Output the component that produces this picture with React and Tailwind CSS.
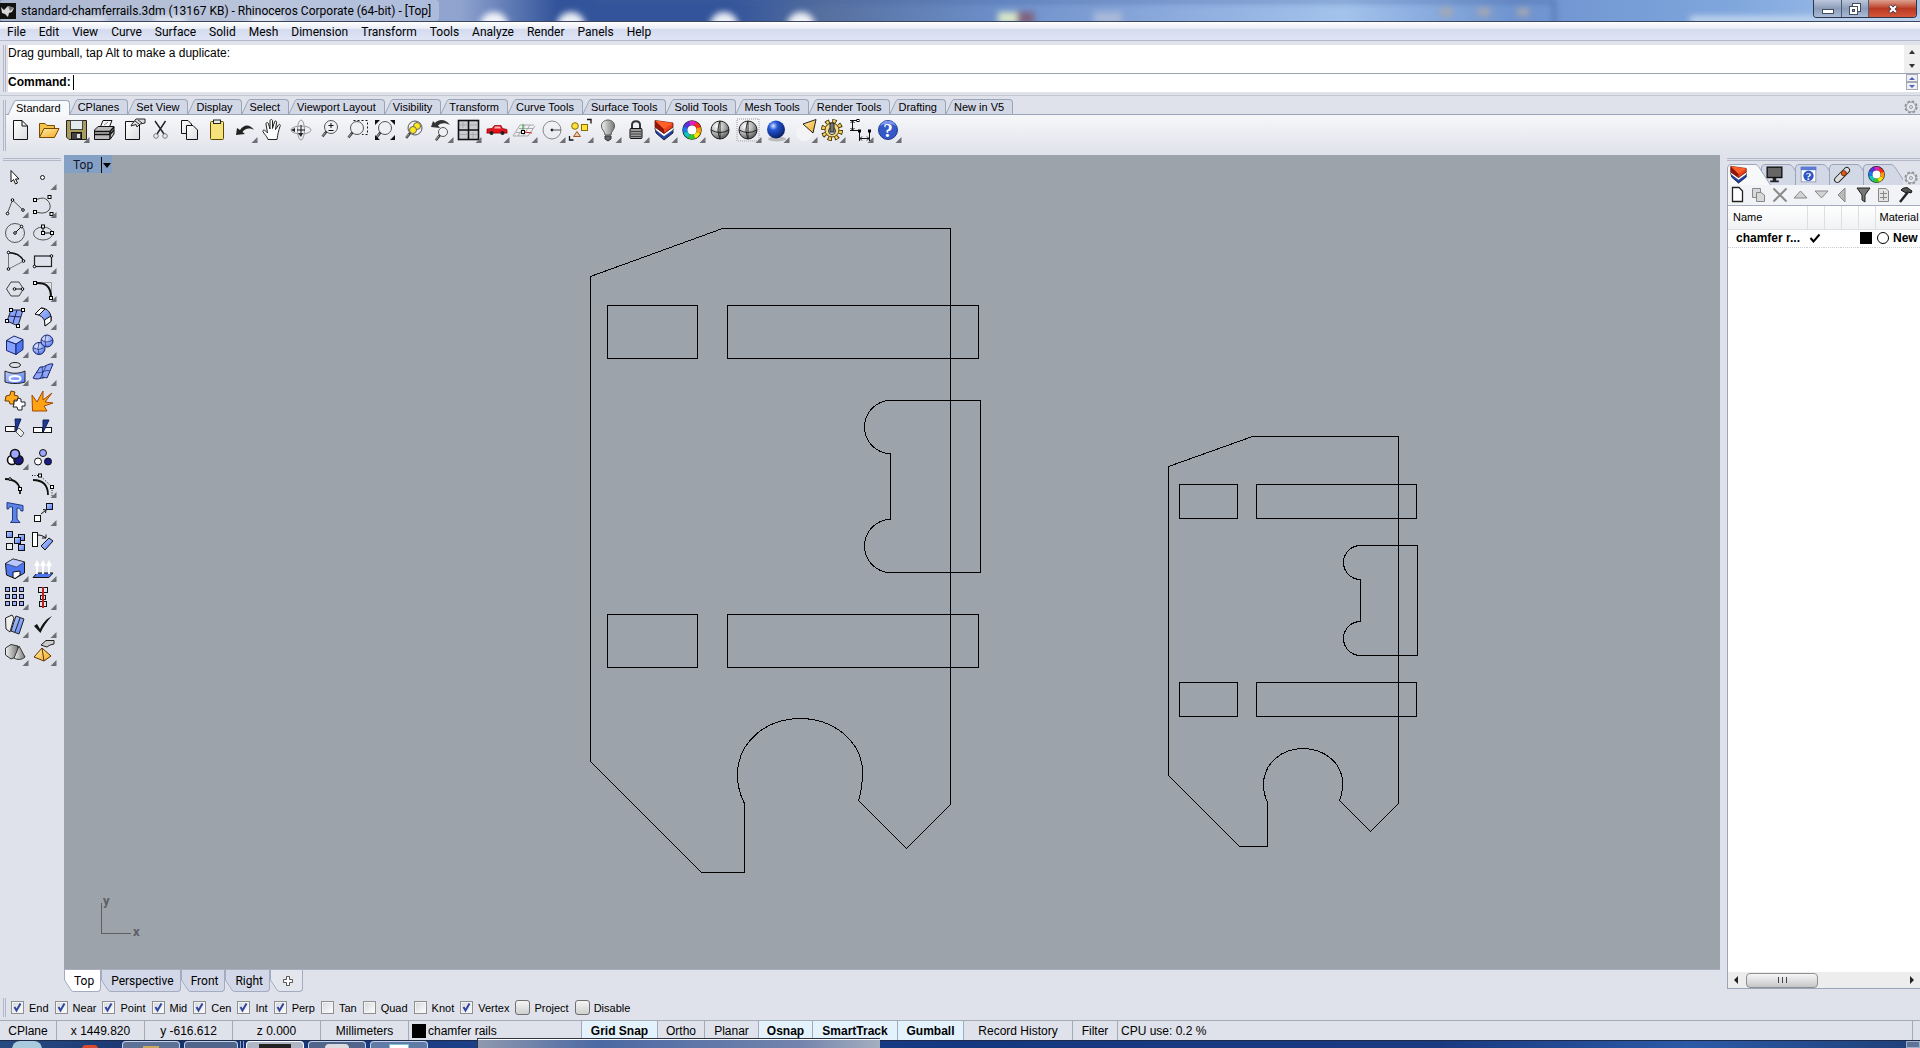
import React from "react";

const MENUS = [
  "File", "Edit", "View", "Curve", "Surface", "Solid", "Mesh", "Dimension",
  "Transform", "Tools", "Analyze", "Render", "Panels", "Help",
];

const TOOL_TABS = [
  "Standard", "CPlanes", "Set View", "Display", "Select", "Viewport Layout", "Visibility",
  "Transform", "Curve Tools", "Surface Tools", "Solid Tools", "Mesh Tools", "Render Tools",
  "Drafting", "New in V5",
];

const VIEW_TABS = ["Top", "Perspective", "Front", "Right"];

const OSNAPS = [
  ["End", true], ["Near", true], ["Point", true], ["Mid", true], ["Cen", true], ["Int", true],
  ["Perp", true], ["Tan", false], ["Quad", false], ["Knot", false], ["Vertex", true],
];

const TOGGLES = [
  { label: "Grid Snap", on: true, width: "w-[76px]" },
  { label: "Ortho", on: false, width: "w-[47px]" },
  { label: "Planar", on: false, width: "w-[54px]" },
  { label: "Osnap", on: true, width: "w-[54px]" },
  { label: "SmartTrack", on: true, width: "w-[85px]" },
  { label: "Gumball", on: true, width: "w-[66px]" },
  { label: "Record History", on: false, width: "w-[109px]" },
  { label: "Filter", on: false, width: "w-[45px]" },
];

// Small control point square used by most of the curve icons
function Pt({ x, y, s = 3 }) {
  return <rect x={x - s / 2} y={y - s / 2} width={s} height={s} fill="#fff" stroke="#000" />;
}

function Dot({ x, y }) {
  return <circle cx={x} cy={y} r="1.3" fill="#fff" stroke="#000" />;
}

function Defs() {
  return (
    <svg width="0" height="0" className="absolute" aria-hidden="true">
      <defs>
        <radialGradient id="gray" cx="0.35" cy="0.3" r="0.8">
          <stop offset="0" stopColor="#fff" />
          <stop offset="0.5" stopColor="#b4b4b4" />
          <stop offset="1" stopColor="#444" />
        </radialGradient>
        <radialGradient id="deep" cx="0.35" cy="0.3" r="0.8">
          <stop offset="0" stopColor="#dbe8ff" />
          <stop offset="0.3" stopColor="#2456d8" />
          <stop offset="1" stopColor="#04164e" />
        </radialGradient>
        <radialGradient id="ball" cx="0.35" cy="0.3" r="0.8">
          <stop offset="0" stopColor="#e4ebff" />
          <stop offset="1" stopColor="#4a6fe8" />
        </radialGradient>
        <linearGradient id="blue" x1="0" y1="0" x2="1" y2="1">
          <stop offset="0" stopColor="#c3d1ff" />
          <stop offset="1" stopColor="#4f7af5" />
        </linearGradient>
        <linearGradient id="gold" x1="0" y1="0" x2="1" y2="1">
          <stop offset="0" stopColor="#fff3b0" />
          <stop offset="1" stopColor="#f5a51c" />
        </linearGradient>
        <linearGradient id="paper" x1="0" y1="0" x2="1" y2="1">
          <stop offset="0" stopColor="#fff" />
          <stop offset="1" stopColor="#d9dcdf" />
        </linearGradient>
        <linearGradient id="ash" x1="0" y1="0" x2="1" y2="0">
          <stop offset="0" stopColor="#f2f2f2" />
          <stop offset="1" stopColor="#777" />
        </linearGradient>
      </defs>
    </svg>
  );
}

const Lens = ({ x = 16, y = 12, r = 6.5 }) => (
  <>
    <circle cx={x} cy={y} r={r} fill="#eef0f4" stroke="#555" />
    <path d={`M${x - r * 0.7} ${y + r * 0.7} L${x - r * 0.7 - 4} ${y + r * 0.7 + 5}`} stroke="#333" strokeWidth="2.4" />
    <path d={`M${x - r * 0.7 - 1} ${y + r * 0.7 + 1} l-3 3.8`} stroke="#eee" strokeWidth="0.7" />
  </>
);

const ColorWheel = ({ x = 14, y = 14, r = 7 }) => {
  const colors = ["#ff2a1a", "#ff9a00", "#f2e600", "#35c52c", "#10c8c0", "#1878ee", "#5a30e0", "#e01fc0"];
  return (
    <>
      <circle cx={x} cy={y} r={r} fill="none" stroke="#222" strokeWidth="5.5" />
      {colors.map((c, i) => (
        <circle
          key={c} cx={x} cy={y} r={r} fill="none" stroke={c} strokeWidth="4.2" pathLength="8"
          strokeDasharray="1.04 6.96" strokeDashoffset={-i} transform={`rotate(-65 ${x} ${y})`}
        />
      ))}
      <circle cx={x} cy={y} r={r - 2.4} fill="#fff" />
    </>
  );
};

const LayerStack = () => (
  <>
    <path d="M5 12 L14 19.5 L23 13 V17 L14 24 L6 17 Z" fill="#1e3fae" stroke="#111" strokeWidth="0.8" />
    <path d="M5 11 L14 17.5 L23 11 V14 L14 20.5 L5.5 14 Z" fill="#fff" stroke="#445" strokeWidth="0.5" />
    <path d="M5 4.5 L23 7 V11 L14 17.5 L5 11 Z" fill="#ee4118" stroke="#400" strokeWidth="0.7" />
    <path d="M5 4.5 L14 13 V17.5 L5 11 Z" fill="#8f1609" />
    <path d="M5 4.5 L23 7 L14 13 Z" fill="#ff5f2a" />
  </>
);

const GlobeLines = () => <path d="M5 14 q9 5 18 0 M14 5 q-4 9 0 18 M14 5 v18" fill="none" stroke="#222" />;

const STANDARD = [
  ["New", false, <path key="a" d="M7.5 4.5 H16 L21.5 10 V23.5 H7.5 Z M16 4.5 V10 H21.5" fill="url(#paper)" stroke="#111" />],
  ["Open", false, <g key="a" stroke="#7a4a00" strokeLinejoin="round"><path d="M5.5 21.5 V7.5 H11 L13 9.5 H20.5 V13" fill="#f3c34b" /><path d="M5.5 21.5 L10 12.5 H25 L20.5 21.5 Z" fill="url(#gold)" /></g>],
  ["Save", true, <g key="a"><path d="M4.5 4.5 H24.5 V23.5 H7 L4.5 21 Z" fill="#a99c5c" stroke="#222" /><rect x="8.5" y="4.5" width="12" height="9" fill="#e3eaf0" stroke="#444" /><rect x="9.5" y="16.5" width="10" height="7" fill="#444" stroke="#111" /><rect x="15" y="18" width="3" height="4" fill="#ddd" /></g>],
  ["Print", false, <g key="a" stroke="#111"><path d="M10 12 L13 4.5 H22 L19 12 Z" fill="#f8f8f8" /><path d="M4.5 14 L8 10.5 H24 V18 L20 23.5 H4.5 Z" fill="#bbb" /><path d="M5 15.5 H20 V23 M5 18.5 H20 L24 14 M20 15.5 L24 11" strokeWidth="1.5" fill="none" /><path d="M14 9 l4 -3" stroke="#888" /></g>],
  ["Properties", false, <g key="a"><path d="M7.5 5.5 H21.5 V23.5 H7.5 Z" fill="url(#paper)" stroke="#111" /><path d="M14 8 L18 3 H27 V7 L22 8 L19 11 L18 8.5 L13 10 Z" fill="#ddd" stroke="#222" /><path d="M17 5 l4 3 M20 4 l4 3" stroke="#333" /></g>],
  ["Cut", false, <g key="a" fill="none"><path d="M9 5 L18 18 M19.5 5 L11 18" stroke="#222" strokeWidth="1.4" /><circle cx="10" cy="20" r="2.3" stroke="#777" /><circle cx="19" cy="20" r="2.3" stroke="#777" /></g>],
  ["Copy", false, <g key="a" fill="url(#paper)" stroke="#111"><path d="M7.5 4.5 H14 L17.5 8 V17.5 H7.5 Z" /><path d="M12.5 9.5 H19 L23.5 14 V23.5 H12.5 Z" /></g>],
  ["Paste", false, <g key="a" stroke="#222"><rect x="8.5" y="5.5" width="13" height="18" rx="1" fill="#f6e27a" stroke="#5c4a00" /><rect x="11.5" y="4" width="7" height="3.5" fill="#e8e8e8" /></g>],
  ["Undo", true, <path key="a" d="M6 19 L7 12 L10 14 C14 8 20 8 24 14 C19 11.5 15 12.5 12.5 16 L15 18 Z" fill="#222" />],
  ["Pan", false, <path key="a" d="M10 23.5 C9 20 4 16 5 14.5 C6.5 13 8.5 16 9.5 17 L8 8 C8 6 10 6 10.5 8 L12 13 V5 C12 3 14.5 3 14.5 5 V12.5 L16.5 6 C17 4 19 5 18.5 7 L17.5 13.5 L20.5 9 C21.5 7.5 23 9 22 10.5 C20.5 15 20 17 19 23.5 Z" fill="#fff" stroke="#222" />],
  ["Rotate View", false, <g key="a" fill="none" stroke="#999"><ellipse cx="15" cy="14" rx="10" ry="4" /><ellipse cx="15" cy="14" rx="3.5" ry="10" /><path d="M15 9 V19 M11 14 H19" stroke="#111" /><path d="M12 17 l3 4 l2 -4 Z M9 12 l-4 2 l4 2 Z" fill="#222" stroke="none" /></g>],
  ["Zoom Dynamic", false, <g key="a"><Lens x={17} y={11} /><path d="M14.5 9.5 H19.5 M17 7 V12 M14.5 14.5 H19.5" stroke="#111" /></g>],
  ["Zoom Window", false, <g key="a"><path d="M11.5 4.5 H25.5 V18.5 H20" fill="none" stroke="#111" strokeDasharray="2 2" /><Lens x={15} y={12} /></g>],
  ["Zoom Extents", false, <g key="a"><Lens x={15} y={12} /><path d="M5 4 h5 l-5 5 Z M25 4 h-5 l5 5 Z M5 24 h5 l-5 -5 Z M25 24 h-5 l5 -5 Z" fill="#111" /></g>],
  ["Zoom Selected", false, <g key="a"><Lens x={17} y={12} r={7} /><circle cx="19" cy="10" r="3.5" fill="#ffe81a" stroke="#666" /><circle cx="15" cy="14" r="3.5" fill="#ffe81a" stroke="#666" /></g>],
  ["Undo View", true, <g key="a"><Lens x={17} y={16} r={4.5} /><path d="M5 11 L7 5 L9 7 C14 2 20 4 24 9 C19 6.5 15 7 12 9.5 L14 12 Z" fill="#333" /></g>],
  ["4 Viewports", true, <g key="a"><rect x="4.5" y="4.5" width="20" height="19" fill="#c9ccd1" stroke="#111" strokeWidth="1.6" /><path d="M14.5 4 V24 M4 14 H25" stroke="#111" strokeWidth="1.6" /><path d="M6 9 h7 M9 6 v6 M16 9 h7 M6 18.5 h7 M16 18.5 h7 M19 16 v6" stroke="#aaa" /></g>],
  ["Right View", true, <g key="a"><path d="M4 17 H26" stroke="#e28b8b" /><path d="M5 13 L10 12.5 L12.5 9.5 H19 L20.5 12.5 L25 13.5 V17 H5 Z" fill="#e3121c" stroke="#8c0007" strokeWidth="0.7" /><path d="M13 10.5 h5 l1 2 h-7 Z" fill="#f6b8b8" /><circle cx="9.5" cy="17" r="2" fill="#222" /><circle cx="20.5" cy="17" r="2" fill="#222" /></g>],
  ["Set CPlane", true, <g key="a" fill="none" stroke="#aaa"><path d="M3 20 L10 9 H24 M3 20 H18 L25 10 M6 16.5 H20 M9 12.5 H23 M8 20 L15 9 M13 20 L20 9" /><path d="M13 16 V8" stroke="#2ba02b" /><path d="M13 16 L22 17" stroke="#d22" /><Pt x={13} y={16} /></g>],
  ["Object Snap", true, <g key="a" fill="none" stroke="#888"><circle cx="14" cy="14" r="9" /><circle cx="14" cy="14" r="1" fill="#111" stroke="#111" /><path d="M14 14 H23" stroke="#555" /></g>],
  ["Select", true, <g key="a"><circle cx="9" cy="10" r="3.3" fill="#ffe13a" stroke="#8a6d00" /><rect x="15.5" y="8.5" width="6" height="6" fill="#ffe13a" stroke="#8a6d00" /><path d="M7.5 20.5 L11 15.5 L14.5 20.5 Z" fill="#eec9a4" stroke="#a3541d" /><path d="M21 3.5 h4 v4 M3.5 20 v4 h4" fill="none" stroke="#111" strokeWidth="1.3" /></g>],
  ["Hide", true, <g key="a"><path d="M7.5 10 C7.5 2 20.5 2 20.5 10 C20.5 14 17 15 17 19 H11 C11 15 7.5 14 7.5 10 Z" fill="url(#ash)" stroke="#555" /><path d="M11 20 h6 v3 l-3 2 l-3 -2 Z" fill="#666" stroke="#333" /></g>],
  ["Lock", true, <g key="a"><path d="M10 13 V9 C10 4 18 4 18 9 V13" fill="none" stroke="#333" strokeWidth="2" /><rect x="8" y="12.5" width="12" height="10" rx="1" fill="#999" stroke="#111" /><path d="M9 15.5 H19 M9 18 H19 M9 20.5 H19" stroke="#444" /></g>],
  ["Layers", true, <LayerStack key="a" />],
  ["Object Properties", true, <ColorWheel key="a" />],
  ["Shade", false, <g key="a"><circle cx="14" cy="14" r="9" fill="url(#gray)" stroke="#222" /><GlobeLines /></g>],
  ["Rendered", true, <g key="a"><rect x="3" y="3" width="22" height="22" fill="none" stroke="#c4c6ca" strokeWidth="2" strokeDasharray="1 1" /><circle cx="14" cy="14" r="9" fill="url(#gray)" stroke="#222" /><GlobeLines /></g>],
  ["Render", true, <g key="a"><ellipse cx="15" cy="23" rx="9" ry="2.5" fill="#bbb" /><circle cx="14" cy="13.5" r="9" fill="url(#deep)" /></g>],
  ["Spotlight", true, <g key="a"><circle cx="14" cy="17" r="8" fill="#f4f4f6" /><path d="M13 8 L26 3.5 L23 17 Z" fill="url(#gold)" stroke="#222" /></g>],
  ["Options", true, <g key="a"><circle cx="14" cy="14" r="8.5" fill="none" stroke="#3f2b00" strokeWidth="5" strokeDasharray="4 2.676" /><circle cx="14" cy="14" r="8.5" fill="none" stroke="#f2cf5e" strokeWidth="3.4" strokeDasharray="2.4 4.276" strokeDashoffset="-0.8" /><circle cx="14" cy="14" r="7" fill="#f6dd84" stroke="#5c4408" /><circle cx="14" cy="15" r="3.5" fill="#eef0f3" stroke="#333" /><rect x="12" y="7" width="4" height="9" fill="#777" stroke="#222" /></g>],
  ["Dimensions", true, <g key="a" fill="none" stroke="#111"><path d="M4 4.5 H12 M4 14.5 H12 M6.5 5 V14 M4.5 7 l2 -2 l2 2 M4.5 12 l2 2 l2 -2 M13.5 16 V25 M23.5 16 V25 M14 22.5 H23 M16 20.5 l-2 2 l2 2 M21 20.5 l2 2 l-2 2" /><Pt x={12} y={4.5} s={2} /><Pt x={13.5} y={15} s={2} /><Pt x={23.5} y={15} s={2} /></g>],
  ["Help", true, <g key="a"><circle cx="14" cy="14" r="9.5" fill="#3558c8" stroke="#20398c" /><path d="M6 10 C8 3 20 3 22 10 C17 7 11 7 6 10" fill="#7c98ea" /><text x="14" y="20.5" textAnchor="middle" className="font-['Liberation_Serif',serif] text-[19px] font-bold" fill="#fff">?</text></g>],
];

const PALETTE = [
  ["Pointer", false, <path key="a" d="M10 7.5 V19 L12.5 16.5 L14.5 21 L16.5 20 L14.5 16 H18 Z" fill="#fff" stroke="#111" />],
  ["Point", true, <circle key="a" cx="13.5" cy="14.5" r="2" fill="#fff" stroke="#111" />],
  ["Polyline", true, <g key="a" fill="none" stroke="#555"><path d="M6.5 22 L11.5 9 L22 19" /><Dot x={6.5} y={22.5} /><Dot x={11.5} y={9} /><Dot x={22} y={19} /></g>],
  ["Control Point Curve", true, <g key="a" fill="none" stroke="#444"><path d="M6 9 C12 7 15 6 18 9 C22 12 22 18 19 20 C15 23 12 22 6 21" /><Pt x={6} y={9} /><Pt x={20.5} y={6} /><Pt x={6} y={21} /><Pt x={22.5} y={23} /></g>],
  ["Circle", true, <g key="a" fill="none" stroke="#555"><circle cx="14" cy="14" r="9.5" /><path d="M14 14 L20 8" stroke="#111" /><Dot x={14} y={14} /><Dot x={20.5} y={7.5} /></g>],
  ["Ellipse", true, <g key="a" fill="none" stroke="#555"><ellipse cx="14" cy="14.5" rx="9.5" ry="6.5" /><path d="M14 8 V14 H23" stroke="#111" /><Pt x={14} y={7.5} /><Pt x={14} y={14} /><Pt x={23} y={14} /></g>],
  ["Arc", true, <g key="a" fill="none" stroke="#777"><path d="M7.5 22 V6 M7.5 22 L23 14" /><path d="M7.5 5.5 C15 6 20 8 22.5 14" stroke="#111" strokeWidth="1.5" /><Dot x={7.5} y={5.5} /><Dot x={22.5} y={14} /><Dot x={7.5} y={22} /></g>],
  ["Rectangle", true, <g key="a"><rect x="5.5" y="9" width="17" height="10.5" fill="none" stroke="#222" strokeWidth="1.2" /><Dot x={22.5} y={9} /><Dot x={5.5} y={19.5} /></g>],
  ["Polygon", true, <g key="a" fill="none" stroke="#444"><path d="M10 7 H18 L22.5 14 L18 21 H10 L5.5 14 Z" /><path d="M13 14 H22" stroke="#111" /><Dot x={13.5} y={14} /><Dot x={21.5} y={14} /></g>],
  ["Fillet", true, <g key="a" fill="none"><path d="M6 7.5 H22.5 V23" stroke="#999" /><path d="M6 8 C16 7.5 22 10 22 23" stroke="#111" strokeWidth="2" /><Pt x={6} y={8} /><Pt x={22} y={23} /></g>],
  ["Surface", true, <g key="a"><path d="M10 7 L22 7 L17 23 L6 18 Z" fill="#8aa2f7" stroke="#223" /><path d="M8 13 L20 14 M16 7 L12 20" stroke="#225" /><Pt x={10} y={7} /><Pt x={22} y={7} /><Pt x={6} y={18} /><Pt x={17} y={23} /></g>],
  ["Loft", true, <g key="a" stroke="#111" strokeLinejoin="round"><path d="M6 11 L12 5 C19 5 23 11 22 18 L16 23 C17 17 13 12 6 11 Z" fill="url(#blue)" /><path d="M6 11 L12 5 L16 6 L10 12 Z" fill="#fff" /><path d="M15.5 17 L22 13 V18.5 L16 23 Z" fill="#fff" /></g>],
  ["Box", true, <g key="a" stroke="#14236e" strokeLinejoin="round"><path d="M5.5 9.5 L15 13 V23.5 L5.5 19.5 Z" fill="#86a0ff" /><path d="M15 13 L22 8.5 V18.5 L15 23.5 Z" fill="#4f78f0" /><path d="M5.5 9.5 L13 5 L22 8.5 L15 13 Z" fill="#c4d0ff" /></g>],
  ["Boolean Union", true, <g key="a" stroke="#14236e"><circle cx="10" cy="17.5" r="6" fill="url(#ball)" /><circle cx="18" cy="10" r="6" fill="url(#ball)" /><path d="M4.5 17 q5 3 10 0 M10 12 q-2 5 0 11 M12.5 9 q5 4 11 0 M17 4 q-2 6 0 12" fill="none" strokeWidth="0.7" /></g>],
  ["Project", true, <g key="a" stroke="#222"><ellipse cx="14" cy="6" rx="5.5" ry="2.5" fill="none" /><path d="M4 12 C10 15 18 15 24 12 V23 C18 25 10 25 4 23 Z" fill="url(#blue)" /><ellipse cx="14" cy="19.5" rx="5.5" ry="2.5" fill="none" stroke="#fff" strokeWidth="2" /></g>],
  ["Mesh", true, <g key="a" stroke="#14236e"><path d="M11 8 C16 9 18 4 24 5 L18 19 C13 17 10 22 4 19 Z" fill="#8fa6f7" /><path d="M8 13.500 C13 15 15 10 21 12 M17 7 L11 20 M13 7 L14 20" fill="none" strokeWidth="0.7" /></g>],
  ["Puzzle", false, <g key="a" strokeLinejoin="round"><path d="M5 9 l4 -1 l1 -4 l4 1 l-1 3 l4 1 l0 4 l-4 0 l0 4 l-4 0 l-1 -3 l-4 0 Z" fill="#ffa91c" stroke="#6e3c00" /><path d="M13 14 l3 0 l1 -3 l3 1 l0 3 l4 0 l0 4 l-3 0 l0 4 l-4 0 l-1 -3 l-4 0 l1 -3 Z" fill="#fff" stroke="#222" /></g>],
  ["Explode", false, <path key="a" d="M3.500 24 L3 8 L8 15 L14 4 L14 13 L23 6 L16 15 L24 16 L15 19 L18 24 Z" fill="#ffa214" stroke="#a24a00" />],
  ["Trim", false, <g key="a" stroke="#111"><path d="M4.5 11.5 H14 L14 16.5 H4.5 Z" fill="#fff" /><path d="M14 16 l4 -3 l5 5 l-3 4 Z" fill="#eee" stroke="#555" /><path d="M14 4 L20 4 L15 16.5 Z" fill="#1f3a94" stroke="#0d1e58" /></g>],
  ["Split", false, <g key="a" stroke="#111"><rect x="4.5" y="12.5" width="9" height="5" fill="#fff" /><rect x="13.5" y="12.5" width="9" height="5" fill="#fff" /><path d="M14 5 L20 5 L14 17.5 Z" fill="#1f3a94" stroke="#0d1e58" /></g>],
  ["Join", true, <g key="a" stroke="#111" strokeWidth="1.6"><circle cx="11" cy="17" r="4.5" fill="#fff" /><circle cx="17.5" cy="17" r="4.5" fill="#1b1b86" /><circle cx="14" cy="11" r="4.5" fill="#9ea6ff" /></g>],
  ["Group", false, <g key="a" stroke="#111"><circle cx="9" cy="18.5" r="3.5" fill="#fff" /><circle cx="19" cy="18.5" r="3.5" fill="#1b1b86" /><circle cx="14" cy="10" r="3.5" fill="#9ea6ff" /></g>],
  ["Edit Points", false, <g key="a"><path d="M4 8 C14 8 20 13 19 23" fill="none" stroke="#111" strokeWidth="1.8" /><Dot x={9} y={8} /><Pt x={19} y={18} s={3} /></g>],
  ["Control Points On", true, <g key="a" fill="none"><path d="M4 9 C14 9 19 14 19 24" stroke="#111" strokeWidth="1.8" /><path d="M3 4.5 H11 L23 16 V25" stroke="#111" strokeDasharray="1 1.5" /><Pt x={11} y={4.5} /><Pt x={23} y={16} /></g>],
  ["Text", false, <path key="a" d="M6 3.5 L22 6.5 V12 H20 C19 9.5 18 9 16 9 V20 L19 23.5 H9.5 L11.5 21 V8 C9 7.5 8 8 7.5 10 H6 Z" fill="#5b84e6" stroke="#203a86" />],
  ["Move", true, <g key="a"><rect x="5.5" y="16.5" width="6" height="6" fill="#fff" stroke="#111" /><rect x="17.5" y="4.5" width="6" height="6" fill="url(#blue)" stroke="#111" /><path d="M12 15 L17 11 M14 10.5 L17 11 L16.5 14" fill="none" stroke="#111" /></g>],
  ["Copy Objects", false, <g key="a" stroke="#111"><rect x="5.5" y="4.5" width="6" height="6" fill="url(#blue)" /><rect x="17.5" y="7.5" width="6" height="6" fill="url(#blue)" /><rect x="13.5" y="10.5" width="6" height="6" fill="url(#blue)" /><rect x="5.5" y="16.5" width="6" height="6" fill="#eee" /><rect x="17.5" y="17.5" width="6" height="6" fill="url(#blue)" /></g>],
  ["Rotate", false, <g key="a" stroke="#111"><rect x="3.5" y="5.5" width="5" height="14" fill="#fff" /><path d="M12 19 L20 11 L24 14 L16 23 Z" fill="url(#blue)" /><path d="M9 8 C12 8 14 9 17 11 M17 7.5 V11 H13" fill="none" /></g>],
  ["Solid Tools", true, <g key="a" stroke="#111" strokeLinejoin="round"><path d="M4.5 8.5 L12 4 L23.5 7 V18 L14 23.5 L5.5 20 Z" fill="#4f78f0" /><path d="M4.5 8.5 L12 4 L23.5 7 L15.5 12 Z" fill="#b9c8ff" strokeWidth="0.5" /><path d="M12 17 L19 16 V20 L14 23.5 L12 22.500 Z" fill="#fff" /></g>],
  ["Extrude", true, <g key="a"><path d="M4 22.5 L8 18 H24 L20 22.5 Z" fill="#4f78f0" stroke="#111" /><path d="M8 19 V9 M14 19 V9 M20 19 V9 M6 11 l2 -4 l2 4 M12 11 l2 -4 l2 4 M18 11 l2 -4 l2 4" fill="none" stroke="#fff" strokeWidth="1.8" /></g>],
  ["Array", true, <g key="a" stroke="#111" fill="#9db2ff">{[4.5, 11.5, 18.5].map((x) => [4.5, 11.5, 18.5].map((y) => <rect key={`${x}-${y}`} x={x} y={y} width="4" height="4" />))}</g>],
  ["Align", true, <g key="a" fill="none" stroke="#111"><rect x="9.5" y="4.5" width="9" height="5" /><rect x="11.5" y="12.5" width="5" height="4" /><rect x="10.5" y="18.5" width="7" height="5" /><path d="M14 4 V25" stroke="#c41f1f" strokeWidth="2" /></g>],
  ["Flow", true, <g key="a" stroke="#222"><path d="M4.5 7 L11 4 L13 7 L9 21 L5 18 Z" fill="#eee" /><path d="M10 20 L15 5 L23 8 L18 23 Z" fill="url(#blue)" /><path d="M14 21 L19 7" /></g>],
  ["Check", true, <path key="a" d="M5 15 L8 13 L11 18 C14 12 17 8 23 5 C18 10 14 16 11.5 22 Z" fill="#111" />],
  ["Shade Objects", true, <g key="a" stroke="#333"><path d="M4.5 9 L10 5.5 L17 7 V17 L10 20 L4.5 16 Z" fill="url(#ash)" /><path d="M13 19 L18 7 L24 18 C21 21 16 21 13 19 Z" fill="url(#ash)" /></g>],
  ["Pyramid", true, <g key="a" stroke="#5b3300"><path d="M5 18 L13 9 L22 17 L15 22 Z" fill="url(#gold)" /><path d="M13 9 L15 22" /><path d="M12 6 L17 1.5 H25 V5 L21 6 L18 8 Z" fill="#ccc" stroke="#222" /></g>],
];

const LAYER_TOOLS = [
  ["New Layer", <path key="a" d="M4.5 2.5 H11 L14.5 6 V16.5 H4.5 Z" fill="#fff" stroke="#222" strokeWidth="1.3" />],
  ["New Sublayer", <g key="a" fill="#d8d8d8" stroke="#888"><path d="M3.5 3.5 H11.5 V12.5 H3.5 Z" /><path d="M7.5 7.5 H12 L15.5 10 V16.5 H7.5 Z" /></g>],
  ["Delete", <path key="a" d="M3.5 3.5 L16.5 16.5 M16.5 3.5 L3.5 16.5" stroke="#8b8b8b" strokeWidth="2" />],
  ["Move Up", <path key="a" d="M3 13 L9.5 6 L16 13 Z" fill="#d2d2d2" stroke="#888" />],
  ["Move Down", <path key="a" d="M3 6 L9.5 13 L16 6 Z" fill="#d2d2d2" stroke="#888" />],
  ["Move Left", <path key="a" d="M12 3 V17 L5 10 Z" fill="#b9b9b9" stroke="#888" />],
  ["Filter Layers", <path key="a" d="M3 3 H16 L11 10 V17 L8 15 V10 Z" fill="#777" stroke="#222" />],
  ["Sheet", <g key="a" fill="#e3e3e3" stroke="#888"><path d="M3.5 3.5 H11 L13.5 6 V16.5 H3.5 Z" /><path d="M5 8.5 H12 M5 12.5 H12 M8.5 6 V15" /></g>],
  ["Tools", <g key="a"><path d="M5 5 C8 2 12 2 13 4 L16 6 L15 8 L12 7 L10 8 Z" fill="#555" stroke="#111" /><path d="M12 7 L4 17" stroke="#222" strokeWidth="2.4" /></g>],
];

const PANEL_TABS = [
  ["Layers", <LayerStack key="a" />],
  ["Display", <g key="a"><rect x="5.5" y="5.5" width="17" height="12" fill="#666" stroke="#111" strokeWidth="1.6" /><path d="M12 18 h4 v3 h3 v2 H9 v-2 h3 Z" fill="#222" /></g>],
  ["Help", <g key="a"><rect x="5.5" y="5.5" width="17" height="17" fill="#fff" stroke="#8a93b4" /><path d="M5 5 H23 V9 H5 Z" fill="#5b7bd5" /><circle cx="14" cy="15.5" r="6" fill="#2f55c6" /><text x="14" y="20" textAnchor="middle" className="font-['Liberation_Serif',serif] text-[13px] font-bold" fill="#fff">?</text></g>],
  ["Materials", <g key="a" strokeLinecap="round"><path d="M8 20 L19 9" stroke="#222" strokeWidth="7.500" /><path d="M8 20 L19 9" stroke="#ddd" strokeWidth="5.500" /><circle cx="15.500" cy="12.500" r="3" fill="#e2571c" stroke="#531" /></g>],
  ["Properties", <ColorWheel key="a" />],
];

function ToolButton({ label, menu, children }) {
  return (
    <button type="button" aria-label={label} title={label} className="h-7 w-7 shrink-0">
      <svg viewBox="0 0 28 28" className="h-7 w-7">
        {children}
        {menu && <path d="M27.5 21 V27 H21.5 Z" fill="#6d6f74" />}
      </svg>
    </button>
  );
}

function Gear() {
  return (
    <button type="button" aria-label="Toolbar options" className="h-3.5 w-3.5 shrink-0">
      <svg viewBox="0 0 16 16" className="h-3.5 w-3.5" fill="none" stroke="#8f9297">
        <circle cx="8" cy="8" r="6.500" strokeWidth="2" strokeDasharray="3 2.105" />
        <circle cx="8" cy="8" r="5.500" fill="#e6e8ed" />
        <circle cx="8" cy="8" r="1.700" />
      </svg>
    </button>
  );
}

function TitleBar() {
  return (
    <header className="relative flex h-[22px] shrink-0 items-start justify-between overflow-hidden border-b border-[#3b465e] bg-[linear-gradient(90deg,#8f9fc0_0%,#a3b2d0_14%,#8fa3cf_24%,#33549a_29%,#33549a_38%,#56709f_43%,#6d8fca_52%,#8fadde_62%,#a3c3ec_70%,#6f93cf_79%,#7fa6dd_90%,#a6c4ea_100%)]">
      {/* blurred desktop seen through the glass */}
      <div aria-hidden="true" className="absolute inset-0 blur-[3px]">
        <i className="absolute left-[3%] top-4 h-2 w-12 bg-white/60" />
        <i className="absolute left-[8%] top-4 h-2 w-8 bg-white/60" />
        <i className="absolute left-[13%] top-4 h-2 w-8 bg-white/70" />
        <i className="absolute left-[25%] top-3 h-4 w-7 rounded-t-full bg-white/90" />
        <i className="absolute left-[29%] top-3 h-4 w-7 rounded-t-full bg-white/90" />
        <i className="absolute left-[37%] top-3 h-4 w-7 rounded-t-full bg-white/90" />
        <i className="absolute left-[41%] top-3 h-4 w-7 rounded-t-full bg-white/90" />
        <i className="absolute left-[52%] top-3 h-3 w-5 bg-[#d9e6c8]" />
        <i className="absolute left-[53%] top-3 h-3 w-4 bg-[#80627c]" />
        <i className="absolute left-[57%] top-3 h-3 w-7 bg-[#a9b9d8]" />
        <i className="absolute left-[31%] top-0 h-7 w-[50%] border-r-2 border-t-2 border-[#42629e]" />
        <i className="absolute left-[75%] top-2 h-2 w-3 bg-[#a7a7b0]" />
        <i className="absolute left-[77%] top-2 h-2 w-3 bg-[#a7a7b0]" />
        <i className="absolute left-[79%] top-2 h-2 w-3 bg-[#a7a7b0]" />
        <i className="absolute left-[88%] top-4 h-2 w-[30%] bg-[#c2d6ef]" />
      </div>
      <div className="relative flex items-center gap-[5px] rounded bg-white/25 pr-2">
        <svg viewBox="0 0 16 16" className="h-5 w-4">
          <rect width="16" height="16" fill="#111" />
          <path d="M1 4 L4 7 L8 3 L14 5 L12 9 L9 10 L8 14 L5 11 L2 10 Z" fill="#d8d8d8" />
          <path d="M8 3 L10 8 L14 5" fill="#777" />
        </svg>
        <h1 className="whitespace-nowrap pt-px text-xs leading-5 text-black">
          standard-chamferrails.3dm (13167 KB) - Rhinoceros Corporate (64-bit) - [Top]
        </h1>
      </div>
      <div className="relative mr-[3px] flex h-[18px] overflow-hidden rounded-b border border-t-0 border-[#2d3648]">
        <button type="button" aria-label="Minimize" className="flex w-7 items-center justify-center border-r border-[#4e5b78] bg-gradient-to-b from-[#bcc7dc] via-[#8c9cb8] to-[#a9bbd8]">
          <svg viewBox="0 0 14 14" className="h-3.5 w-3.5"><rect x="1.5" y="7.5" width="11" height="4" fill="#fff" stroke="#444c60" /></svg>
        </button>
        <button type="button" aria-label="Restore" className="flex w-[27px] items-center justify-center border-r border-[#4e5b78] bg-gradient-to-b from-[#bcc7dc] via-[#8c9cb8] to-[#a9bbd8]">
          <svg viewBox="0 0 14 14" className="h-3.5 w-3.5" fill="#fff" stroke="#444c60">
            <rect x="4.5" y="1.5" width="8" height="8" />
            <rect x="1.5" y="4.5" width="8" height="8" />
            <rect x="4.5" y="7.5" width="2" height="2" fill="#8494b4" />
          </svg>
        </button>
        <button type="button" aria-label="Close" className="flex w-[47px] items-center justify-center bg-gradient-to-b from-[#dca08f] via-[#b93a22] to-[#d5563a]">
          <svg viewBox="0 0 14 14" className="h-3 w-3">
            <path d="M3 3 L11 11 M11 3 L3 11" stroke="#50303a" strokeWidth="4.5" />
            <path d="M3.5 3.5 L10.5 10.5 M10.5 3.5 L3.5 10.5" stroke="#fff" strokeWidth="2.5" />
          </svg>
        </button>
      </div>
    </header>
  );
}

function MenuBar() {
  return (
    <nav className="flex h-[19px] shrink-0 items-end gap-[13px] border-b border-[#b3b9cb] bg-[linear-gradient(#ffffff_0%,#e8ecf6_38%,#d4dbee_40%,#dfe5f5_100%)] pl-[7px]">
      {MENUS.map((name) => (
        <button key={name} type="button" className="text-xs leading-4">{name}</button>
      ))}
    </nav>
  );
}

function CommandArea() {
  return (
    <section className="flex h-[55px] shrink-0 border-b border-[#c3c7d0] pb-[3px] pt-1 font-['Liberation_Sans',Arial,sans-serif] text-xs">
      <div className="ml-[3px] mr-0.5 w-[3px] shrink-0 border-x border-[#b1b7c7]" />
      <div className="flex min-w-0 flex-1 flex-col bg-white">
        <div className="flex h-[29px] shrink-0 justify-between border-b border-[#9aa4b4]">
          <p className="leading-4">Drag gumball, tap Alt to make a duplicate:</p>
          <div className="flex w-4 flex-col items-center justify-around bg-[#efefef]">
            <button type="button" aria-label="Scroll up" className="border-x-[3px] border-b-4 border-x-transparent border-b-[#333]" />
            <button type="button" aria-label="Scroll down" className="border-x-[3px] border-t-4 border-x-transparent border-t-[#333]" />
          </div>
        </div>
        <div className="flex h-4 items-center">
          <label htmlFor="command" className="font-bold leading-4">Command:</label>
          <span className="ml-0.5 h-[15px] w-px bg-black" />
          <input id="command" className="h-4 min-w-0 flex-1 outline-none" />
          <div className="mr-0.5 flex h-4 w-3 flex-col justify-between border border-[#a4a8b2] bg-[#a4a8b2]">
            <button type="button" aria-label="Previous command" className="flex h-[6px] items-center justify-center bg-[#eef0f5]"><span className="border-x-[3px] border-b-[3px] border-x-transparent border-b-[#4762b8]" /></button>
            <button type="button" aria-label="Next command" className="flex h-[6px] items-center justify-center bg-[#eef0f5]"><span className="border-x-[3px] border-t-[3px] border-x-transparent border-t-[#4762b8]" /></button>
          </div>
        </div>
      </div>
    </section>
  );
}

function ToolbarArea() {
  return (
    <section className="flex h-[59px] shrink-0 pb-1 pt-1">
      <div className="ml-[3px] w-[3px] shrink-0 border-x border-[#b1b7c7]" />
      <div className="min-w-0 flex-1">
        <div className="flex h-[15px] items-end border-b border-[#9aa6b8] pl-0.5 font-['Liberation_Sans',Arial,sans-serif] text-[11px]">
          {TOOL_TABS.map((name, i) => {
            const active = i === 0;
            return (
              <button key={name} type="button" className={`flex h-[15px] shrink-0 ${active ? "-mb-px" : ""}`}>
                <svg viewBox="0 0 8 15" className={`h-[15px] w-2 ${active ? "fill-[#f8f9fb]" : "fill-[#d3d8e7]"}`}>
                  <path d="M0 15 L8 0 V15 Z" />
                  <path d="M0 15 L6 2 Q7 0.500 8 0.500" fill="none" stroke="#9aa6b8" />
                </svg>
                <span className={`h-[15px] rounded-tr border-r border-t border-[#9aa6b8] pr-2 leading-[15px] ${active ? "bg-[#f8f9fb]" : "bg-[#d3d8e7]"}`}>
                  {name}
                </span>
              </button>
            );
          })}
          <div className="ml-auto mr-0.5 flex">
            <Gear />
          </div>
        </div>
        <div className="flex h-10 items-start bg-gradient-to-b from-[#f6f7f9] to-[#dfe2ea] pt-px">
          {STANDARD.map(([label, menu, art]) => (
            <ToolButton key={label} label={label} menu={menu}>{art}</ToolButton>
          ))}
        </div>
      </div>
    </section>
  );
}

function Palette() {
  return (
    <aside className="w-16 shrink-0 pt-[3px]">
      <div className="mx-[3px] mb-0.5 h-[3px] border-y border-[#b1b7c7]" />
      <div className="ml-px grid w-14 grid-cols-2">
        {PALETTE.map(([label, menu, art]) => (
          <ToolButton key={label} label={label} menu={menu}>{art}</ToolButton>
        ))}
      </div>
    </aside>
  );
}

function Viewport() {
  return (
    <div className="relative min-h-0 flex-1 overflow-hidden bg-[#9da3ab]">
      <svg viewBox="64 155 1656 814" preserveAspectRatio="xMidYMid meet" className="absolute inset-0 h-full w-full" fill="none" stroke="#000" shapeRendering="crispEdges">
        {/* standard size plate */}
        <path d="M590.5 276.5 L722.5 228.5 H950.5 V804.5 L906.5 848.5 L858.5 800.5 C861 793 862.5 784 862.5 772 C862.5 742 834 718.5 800 718.5 C766 718.5 737.5 742 737.5 775 C737.5 788 741 797 744.5 803.5 V872.5 H701.5 L590.5 761.5 Z" />
        <path d="M607.5 305.5 H697.5 V358.5 H607.5 Z M727.5 305.5 H978.5 V358.5 H727.5 Z" />
        <path d="M607.5 614.5 H697.5 V667.5 H607.5 Z M727.5 614.5 H978.5 V667.5 H727.5 Z" />
        <path d="M980.5 400.5 H890.5 A26 26.5 0 0 0 890.5 453.5 V519.5 A26 26.5 0 0 0 890.5 572.5 H980.5 Z" />
        {/* scaled plate */}
        <path d="M1168.5 466.5 L1252.5 436.5 H1398.5 V803.5 L1370.5 831.5 L1339.5 800.5 C1341.5 796 1342.5 790 1342.5 783 C1342.5 763 1324 748.5 1303 748.5 C1282 748.5 1263.5 763 1263.5 785 C1263.5 792 1265 797 1267.5 802.5 V846.5 H1239.5 L1168.5 775.5 Z" />
        <path d="M1179.5 484.5 H1237.5 V518.5 H1179.5 Z M1256.5 484.5 H1416.5 V518.5 H1256.5 Z" />
        <path d="M1179.5 682.5 H1237.5 V716.5 H1179.5 Z M1256.5 682.5 H1416.5 V716.5 H1256.5 Z" />
        <path d="M1417.5 545.5 H1360.5 A17 17 0 0 0 1360.5 579.5 V621.5 A17 17 0 0 0 1360.5 655.5 H1417.5 Z" />
        {/* world axes */}
        <path d="M101.5 903 V933.5 H131" stroke="#5c5f64" />
        <text x="133" y="936" fill="#5c5f64" stroke="none" className="text-[13px] font-bold">x</text>
        <text x="103" y="905" fill="#5c5f64" stroke="none" className="text-[13px] font-bold">y</text>
      </svg>
      <button type="button" className="absolute left-0 top-0 flex h-[18px] items-end bg-[#84a0c4] pl-[9px] text-xs leading-4 text-[#10182a]">
        Top
        <span className="ml-2 h-4 w-px bg-black" />
        <span className="mx-px mb-[5px] border-x-[4px] border-t-[5px] border-x-transparent border-t-black" />
      </button>
    </div>
  );
}

function ViewTabs() {
  return (
    <div className="flex h-[29px] shrink-0 items-start border-t border-[#a8adc0]">
      {VIEW_TABS.concat("+").map((name) => {
        const fill = name === "Top" ? "bg-white" : name === "+" ? "bg-[#e3e6ed]" : "bg-[#d3d8e9]";
        const svgFill = name === "Top" ? "#ffffff" : name === "+" ? "#e3e6ed" : "#d3d8e9";
        return (
          <button key={name} type="button" aria-label={name === "+" ? "New viewport" : name} className="flex h-[22px] text-xs">
            <svg viewBox="0 0 10 22" className="h-[22px] w-2.5">
              <path d="M0 0 H10 V21.5 Q8 21.5 7 20 L0.5 10 V0" fill={svgFill} />
              <path d="M10 21.5 Q8 21.5 7 20 L0.5 10 V0" fill="none" stroke="#a3abc0" />
            </svg>
            <span className={`flex h-[22px] items-center rounded-br border-b border-r border-[#a3abc0] pr-1.5 leading-4 ${fill}`}>
              {name === "+" ? (
                <svg viewBox="0 0 12 12" className="mx-0.5 h-3 w-3">
                  <path d="M4.5 1.5 h3 v3 h3 v3 h-3 v3 h-3 v-3 h-3 v-3 h3 Z" fill="#fff" stroke="#555" />
                </svg>
              ) : (
                name
              )}
            </span>
          </button>
        );
      })}
    </div>
  );
}

function LayersPanel() {
  return (
    <aside className="w-[200px] shrink-0 pb-[9px] pl-[7px] pt-[3px]">
      <div className="flex h-full flex-col">
        <div className="mb-[3px] h-[3px] shrink-0 border-y border-[#b1b7c7]" />
        <div className="flex h-[21px] shrink-0 items-end">
          {PANEL_TABS.map(([label, art], i) => (
            <button key={label} type="button" aria-label={label} className={`relative h-[21px] w-[34px] shrink-0 ${i === 0 ? "z-10" : ""}`}>
              <svg viewBox="0 0 44 21" className="absolute left-0 top-0 h-[21px] w-11">
                <path d="M0.5 21 V4 Q0.5 0.5 4 0.5 H28 Q30 0.5 31.5 2.5 L43.5 21" fill={i === 0 ? "#f7f8fa" : "#d3d8e7"} stroke="#9aa6b8" />
                <svg x={i === 0 ? 2 : 4} y="1" width="19" height="19" viewBox="3 3 22 22">{art}</svg>
              </svg>
            </button>
          ))}
          <div className="relative ml-auto mr-0.5 flex bg-[#dfe2ea] pl-px">
            <Gear />
          </div>
        </div>
        <div className="flex min-h-0 flex-1 flex-col overflow-hidden border-b border-l border-[#9aa6b8] bg-white">
          <div className="flex h-[21px] shrink-0 items-center gap-px border-b border-[#a4adbd] bg-[#f1f3f6]">
            {LAYER_TOOLS.map(([label, art]) => (
              <button key={label} type="button" aria-label={label} className="h-5 w-5 shrink-0">
                <svg viewBox="0 0 20 20" className="h-5 w-5">{art}</svg>
              </button>
            ))}
          </div>
          <div className="min-h-0 flex-1 font-['Liberation_Sans',Arial,sans-serif]">
            <table className="w-full table-fixed text-left">
              <colgroup>
                <col className="w-[79px]" />
                <col className="w-[17px]" />
                <col className="w-[17px]" />
                <col className="w-[17px]" />
                <col className="w-[17px]" />
                <col />
              </colgroup>
              <thead className="bg-gradient-to-b from-white to-[#f1f2f4] text-[11px]">
                <tr className="h-[23px] border-b border-[#dcdfe4]">
                  <th scope="col" className="border-r border-[#dcdfe4] pl-[5px] font-normal">Name</th>
                  <td className="border-r border-[#dcdfe4]" />
                  <td className="border-r border-[#dcdfe4]" />
                  <td className="border-r border-[#dcdfe4]" />
                  <td className="border-r border-[#dcdfe4]" />
                  <th scope="col" className="pl-1 font-normal">Material</th>
                </tr>
              </thead>
              <tbody className="text-xs font-bold">
                <tr className="h-[18px] border-b border-dotted border-[#c9ccd2]">
                  <td className="whitespace-nowrap pl-2 leading-4">chamfer r...</td>
                  <td>
                    <svg viewBox="0 0 12 12" className="ml-0.5 h-3 w-3"><path d="M1.5 6 L4.5 9.5 L10.5 2.5" fill="none" stroke="#000" strokeWidth="2" /></svg>
                  </td>
                  <td />
                  <td />
                  <td><span className="ml-0.5 block h-3 w-3 bg-black" /></td>
                  <td>
                    <span className="flex items-center gap-1 pl-0.5 leading-4">
                      <span className="h-3 w-3 shrink-0 rounded-full border border-black" />
                      New
                    </span>
                  </td>
                </tr>
              </tbody>
            </table>
          </div>
          <div className="flex h-4 shrink-0 items-center bg-[#ededee] px-1.5">
            <button type="button" aria-label="Scroll left" className="border-y-[4px] border-r-4 border-y-transparent border-r-[#222]" />
            <div className="ml-2 flex h-[15px] w-[72px] items-center justify-center gap-[3px] rounded-sm border border-[#8f8f8f] bg-gradient-to-b from-[#f5f5f5] via-[#dfdfe1] to-[#c6c6ca]">
              <i className="h-1.5 w-px bg-[#444]" />
              <i className="h-1.5 w-px bg-[#444]" />
              <i className="h-1.5 w-px bg-[#444]" />
            </div>
            <button type="button" aria-label="Scroll right" className="ml-auto border-y-[4px] border-l-4 border-y-transparent border-l-[#222]" />
          </div>
        </div>
      </div>
    </aside>
  );
}

function SnapBox({ label, checked }) {
  return (
    <label className="relative flex items-center gap-[5px]">
      <input type="checkbox" defaultChecked={checked} className="peer h-[13px] w-[13px] appearance-none border border-[#8e8f8f] bg-gradient-to-br from-[#d3d6dc] to-white shadow-[inset_0_0_0_1px_#f4f4f4]" />
      <svg viewBox="0 0 13 13" className="pointer-events-none absolute left-0 hidden h-[13px] w-[13px] peer-checked:block">
        <path d="M3.5 6 L5.5 9.5 L9.5 2.5" fill="none" stroke="#31479e" strokeWidth="2" />
      </svg>
      {label}
    </label>
  );
}

function OsnapBar() {
  return (
    <div className="flex h-[22px] shrink-0 items-center gap-1.5 pb-[3px] font-['Liberation_Sans',Arial,sans-serif] text-[11px] leading-4">
      <div className="-mr-px ml-[3px] h-[19px] w-[3px] border-x border-[#b1b7c7]" />
      {OSNAPS.map(([label, checked]) => (
        <SnapBox key={label} label={label} checked={checked} />
      ))}
      {["Project", "Disable"].map((label) => (
        <label key={label} className="flex items-center gap-1">
          <input type="checkbox" className="h-[15px] w-[15px] appearance-none rounded-[3px] border border-[#6f6f6f] bg-gradient-to-b from-[#f6f6f6] to-[#cfcfcf]" />
          {label}
        </label>
      ))}
    </div>
  );
}

function StatusBar() {
  const cell = "flex shrink-0 items-center justify-center border-r border-[#a3abb9]";
  return (
    <footer className="flex h-5 shrink-0 border-t border-[#a3abb9] font-['Liberation_Sans',Arial,sans-serif] text-xs leading-4">
      <button type="button" className={`${cell} w-[57px]`}>CPlane</button>
      <span className={`${cell} w-[88px]`}>x 1449.820</span>
      <span className={`${cell} w-[88px]`}>y -616.612</span>
      <span className={`${cell} w-[88px]`}>z 0.000</span>
      <span className={`${cell} w-[88px]`}>Millimeters</span>
      <button type="button" className="flex w-[173px] shrink-0 items-center gap-0.5 border-r border-[#a3abb9] pl-[3px]">
        <span className="h-3.5 w-3.5 bg-black" />
        chamfer rails
      </button>
      {TOGGLES.map(({ label, on, width }) => (
        <button key={label} type="button" aria-pressed={on} className={`${cell} ${width} ${on ? "bg-[#e3f2fc] font-bold" : ""}`}>
          {label}
        </button>
      ))}
      <span className="flex flex-1 items-center border-r border-[#a3abb9] pl-[3px]">CPU use: 0.2 %</span>
      <span className="w-[7px]" />
    </footer>
  );
}

function Taskbar() {
  return (
    <div className="relative flex h-2 shrink-0 border-t border-[#1d2a4a] bg-[linear-gradient(90deg,#274a80_0%,#14306e_10%,#1e4590_30%,#14387f_50%,#1a3a80_75%,#2b5aa6_88%,#1f3f78_100%)]">
      <span className="ml-3 h-2 w-[30px] rounded-t-full bg-[#a9c9dc]" />
      <span className="ml-10 mt-1 h-1 w-4 rounded-t-full bg-[#d9482f]" />
      <span className="ml-6 flex w-[58px] justify-center rounded-t border border-b-0 border-[#c4d2ea] bg-[#5d7096]"><i className="mt-1 h-1 w-4 bg-[#c9a95c]" /></span>
      <span className="ml-1 w-[54px] rounded-t border border-b-0 border-[#c4d2ea] bg-[#50648c]" />
      <span className="ml-0.5 w-1 border-x border-[#8fa2c8]" />
      <span className="ml-0.5 flex w-[58px] justify-center rounded-t border border-b-0 border-white bg-[#aeb6c6]"><i className="mt-0.5 h-1.5 w-8 bg-[#222]" /></span>
      <span className="ml-1 flex w-[58px] justify-center rounded-t border border-b-0 border-[#c4d2ea] bg-[#50648c]"><i className="mt-0.5 h-1.5 w-6 rounded-t bg-[#dcdcde]" /></span>
      <span className="ml-1 flex w-[58px] justify-center rounded-t border border-b-0 border-[#c4d2ea] bg-[#5f7ba6]"><i className="mt-0.5 h-1.5 w-5 border border-[#7cc3dd] bg-white" /></span>
      {/* taskbar preview glass peeking over the status bar */}
      <span className="absolute -top-[3px] left-[477px] h-3 w-[403px] border-l border-t border-[#2c3446] bg-[linear-gradient(90deg,#8e99ae,#4c69a4_30%,#7284ac_80%,#a5afc0)] shadow-[inset_0_1px_0_#fff]" />
      <span className="ml-auto w-3.5 border border-[#9fb0cc] bg-[#5f7396]" />
    </div>
  );
}

export default function App() {
  return (
    <div className="flex h-screen flex-col overflow-hidden bg-[#dfe2ea] font-[Roboto,'Noto_Sans',sans-serif] text-black">
      <Defs />
      <TitleBar />
      <MenuBar />
      <CommandArea />
      <ToolbarArea />
      <main className="flex min-h-0 flex-1">
        <Palette />
        <div className="flex min-w-0 flex-1 flex-col">
          <Viewport />
          <ViewTabs />
        </div>
        <LayersPanel />
      </main>
      <OsnapBar />
      <StatusBar />
      <Taskbar />
    </div>
  );
}
